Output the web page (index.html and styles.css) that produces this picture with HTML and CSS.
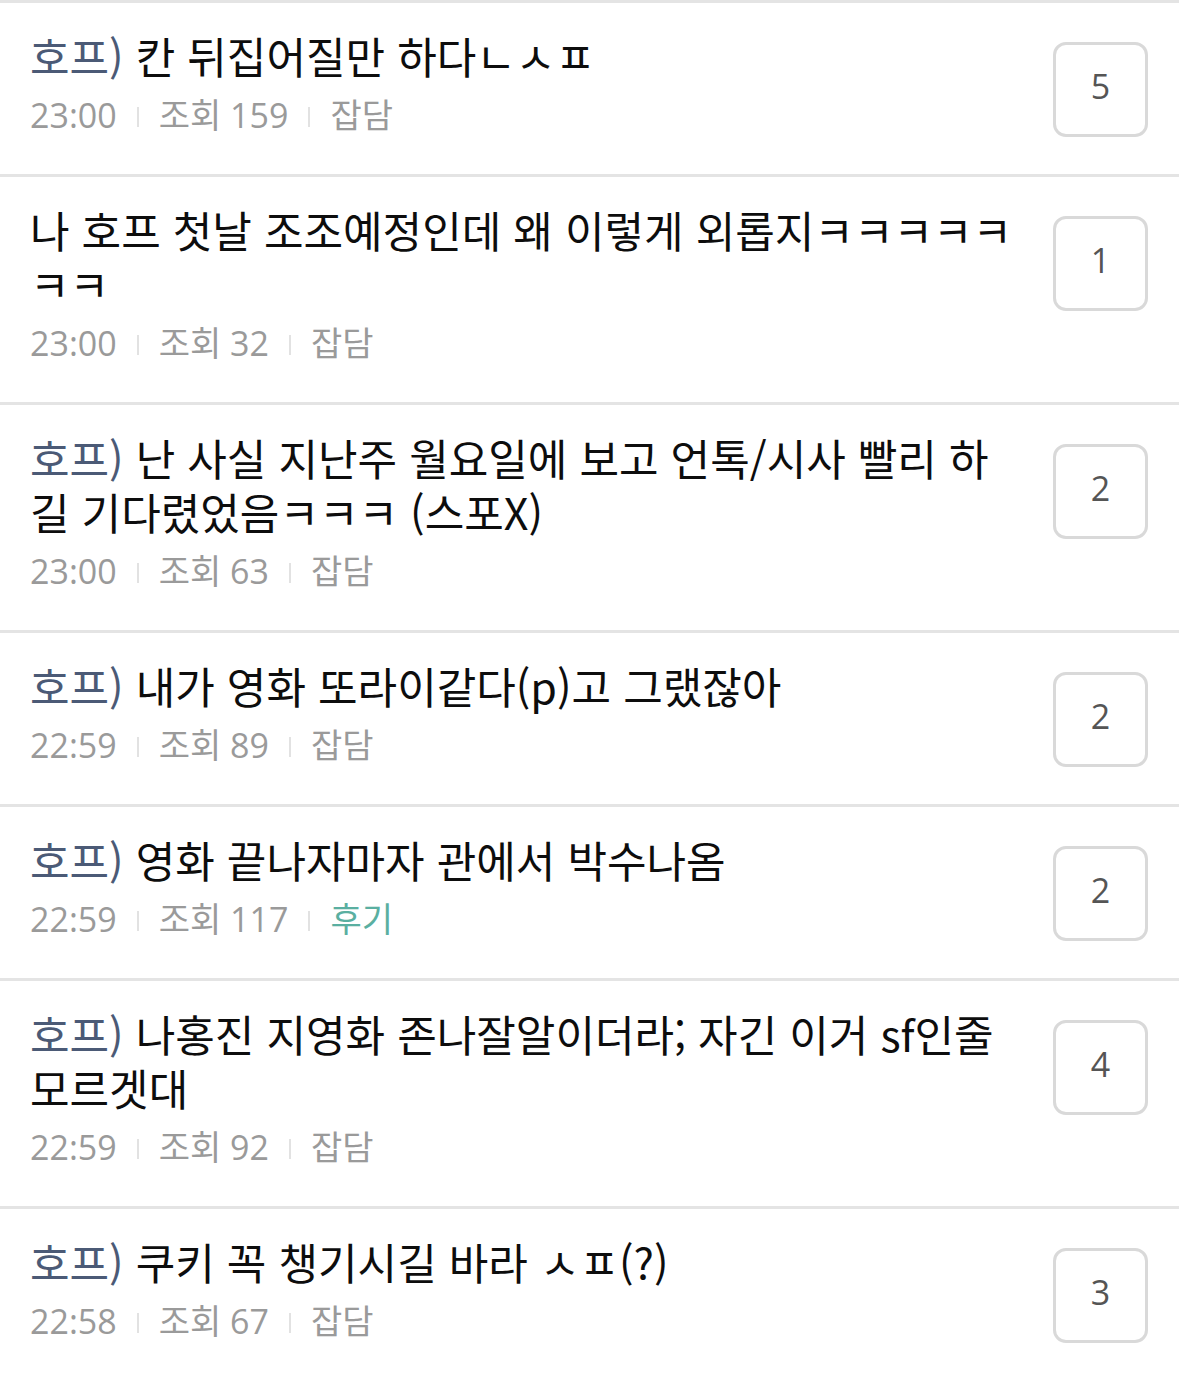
FILE: index.html
```html
<!DOCTYPE html>
<html lang="ko">
	<head>
		<meta charset="UTF-8" />
		<meta name="viewport" content="width=device-width, initial-scale=1.0" />
		<title>게시판</title>
		<link rel="stylesheet" href="styles.css">
	</head>
	<body>
		<ul class="post-list">
			<li class="post">
				<div class="post__body">
					<p class="post__title"><span class="post__tag">호프)</span> 칸 뒤집어질만 하다ㄴㅅㅍ</p>
					<div class="post__meta">
						<span>23:00</span><i class="bar"></i><span>조회 159</span><i class="bar"></i><span>잡담</span>
					</div>
				</div>
				<div class="post__count">5</div>
			</li>

			<li class="post">
				<div class="post__body">
					<p class="post__title">나 호프 첫날 조조예정인데 왜 이렇게 외롭지ㅋㅋㅋㅋㅋㅋㅋ</p>
					<div class="post__meta">
						<span>23:00</span><i class="bar"></i><span>조회 32</span><i class="bar"></i><span>잡담</span>
					</div>
				</div>
				<div class="post__count">1</div>
			</li>

			<li class="post">
				<div class="post__body">
					<p class="post__title"><span class="post__tag">호프)</span> 난 사실 지난주 월요일에 보고 언톡/시사 빨리 하길 기다렸었음ㅋㅋㅋ (스포X)</p>
					<div class="post__meta">
						<span>23:00</span><i class="bar"></i><span>조회 63</span><i class="bar"></i><span>잡담</span>
					</div>
				</div>
				<div class="post__count">2</div>
			</li>

			<li class="post">
				<div class="post__body">
					<p class="post__title"><span class="post__tag">호프)</span> 내가 영화 또라이같다(p)고 그랬잖아</p>
					<div class="post__meta">
						<span>22:59</span><i class="bar"></i><span>조회 89</span><i class="bar"></i><span>잡담</span>
					</div>
				</div>
				<div class="post__count">2</div>
			</li>

			<li class="post">
				<div class="post__body">
					<p class="post__title"><span class="post__tag">호프)</span> 영화 끝나자마자 관에서 박수나옴</p>
					<div class="post__meta">
						<span>22:59</span><i class="bar"></i><span>조회 117</span><i class="bar"></i><span class="cat--review">후기</span>
					</div>
				</div>
				<div class="post__count">2</div>
			</li>

			<li class="post">
				<div class="post__body">
					<p class="post__title"><span class="post__tag">호프)</span> 나홍진 지영화 존나잘알이더라; 자긴 이거 sf인줄 모르겟대</p>
					<div class="post__meta">
						<span>22:59</span><i class="bar"></i><span>조회 92</span><i class="bar"></i><span>잡담</span>
					</div>
				</div>
				<div class="post__count">4</div>
			</li>

			<li class="post">
				<div class="post__body">
					<p class="post__title"><span class="post__tag">호프)</span> 쿠키 꼭 챙기시길 바라 ㅅㅍ(?)</p>
					<div class="post__meta">
						<span>22:58</span><i class="bar"></i><span>조회 67</span><i class="bar"></i><span>잡담</span>
					</div>
				</div>
				<div class="post__count">3</div>
			</li>
		</ul>
	</body>
</html>
```

FILE: styles.css
```css
* {
	box-sizing: border-box;
	margin: 0;
	padding: 0;
}

body {
	font-family: "Noto Sans CJK KR", "Noto Sans", sans-serif;
	background-color: #fff;
	color: #111;
}

.post-list {
	list-style: none;
}

.post {
	display: flex;
	align-items: flex-start;
	gap: 34px;
	border-top: 3px solid #e4e4e4;
	padding: 25px 31px 39px 30px;
}

.post__body {
	flex: 1;
	min-width: 0;
}

.post__title {
	font-size: 43px;
	line-height: 54px;
	color: #0d0d0d;
}

.post__tag {
	color: #4b5a76;
}

.post__meta {
	display: flex;
	align-items: center;
	margin-top: 13px;
	height: 40px;
	line-height: 40px;
	font-family: "Open Sans", "Noto Sans CJK KR", sans-serif;
	font-size: 34px;
	color: #9a9a9a;
}

.bar {
	display: inline-block;
	width: 2px;
	height: 20px;
	margin: 4px 20px 0;
	background-color: #e2e2e2;
}

.cat--review {
	color: #5aafa1;
}

/* badge may hang below the text block, so it must not stretch the row */
.post__count {
	flex: none;
	width: 95px;
	height: 95px;
	margin-top: 14px;
	margin-bottom: -30px;
	padding-bottom: 8px;
	display: flex;
	justify-content: center;
	align-items: center;
	border: 3px solid #d9d9d9;
	border-radius: 13px;
	font-family: "Open Sans", sans-serif;
	font-size: 34px;
	color: #555;
}
```
